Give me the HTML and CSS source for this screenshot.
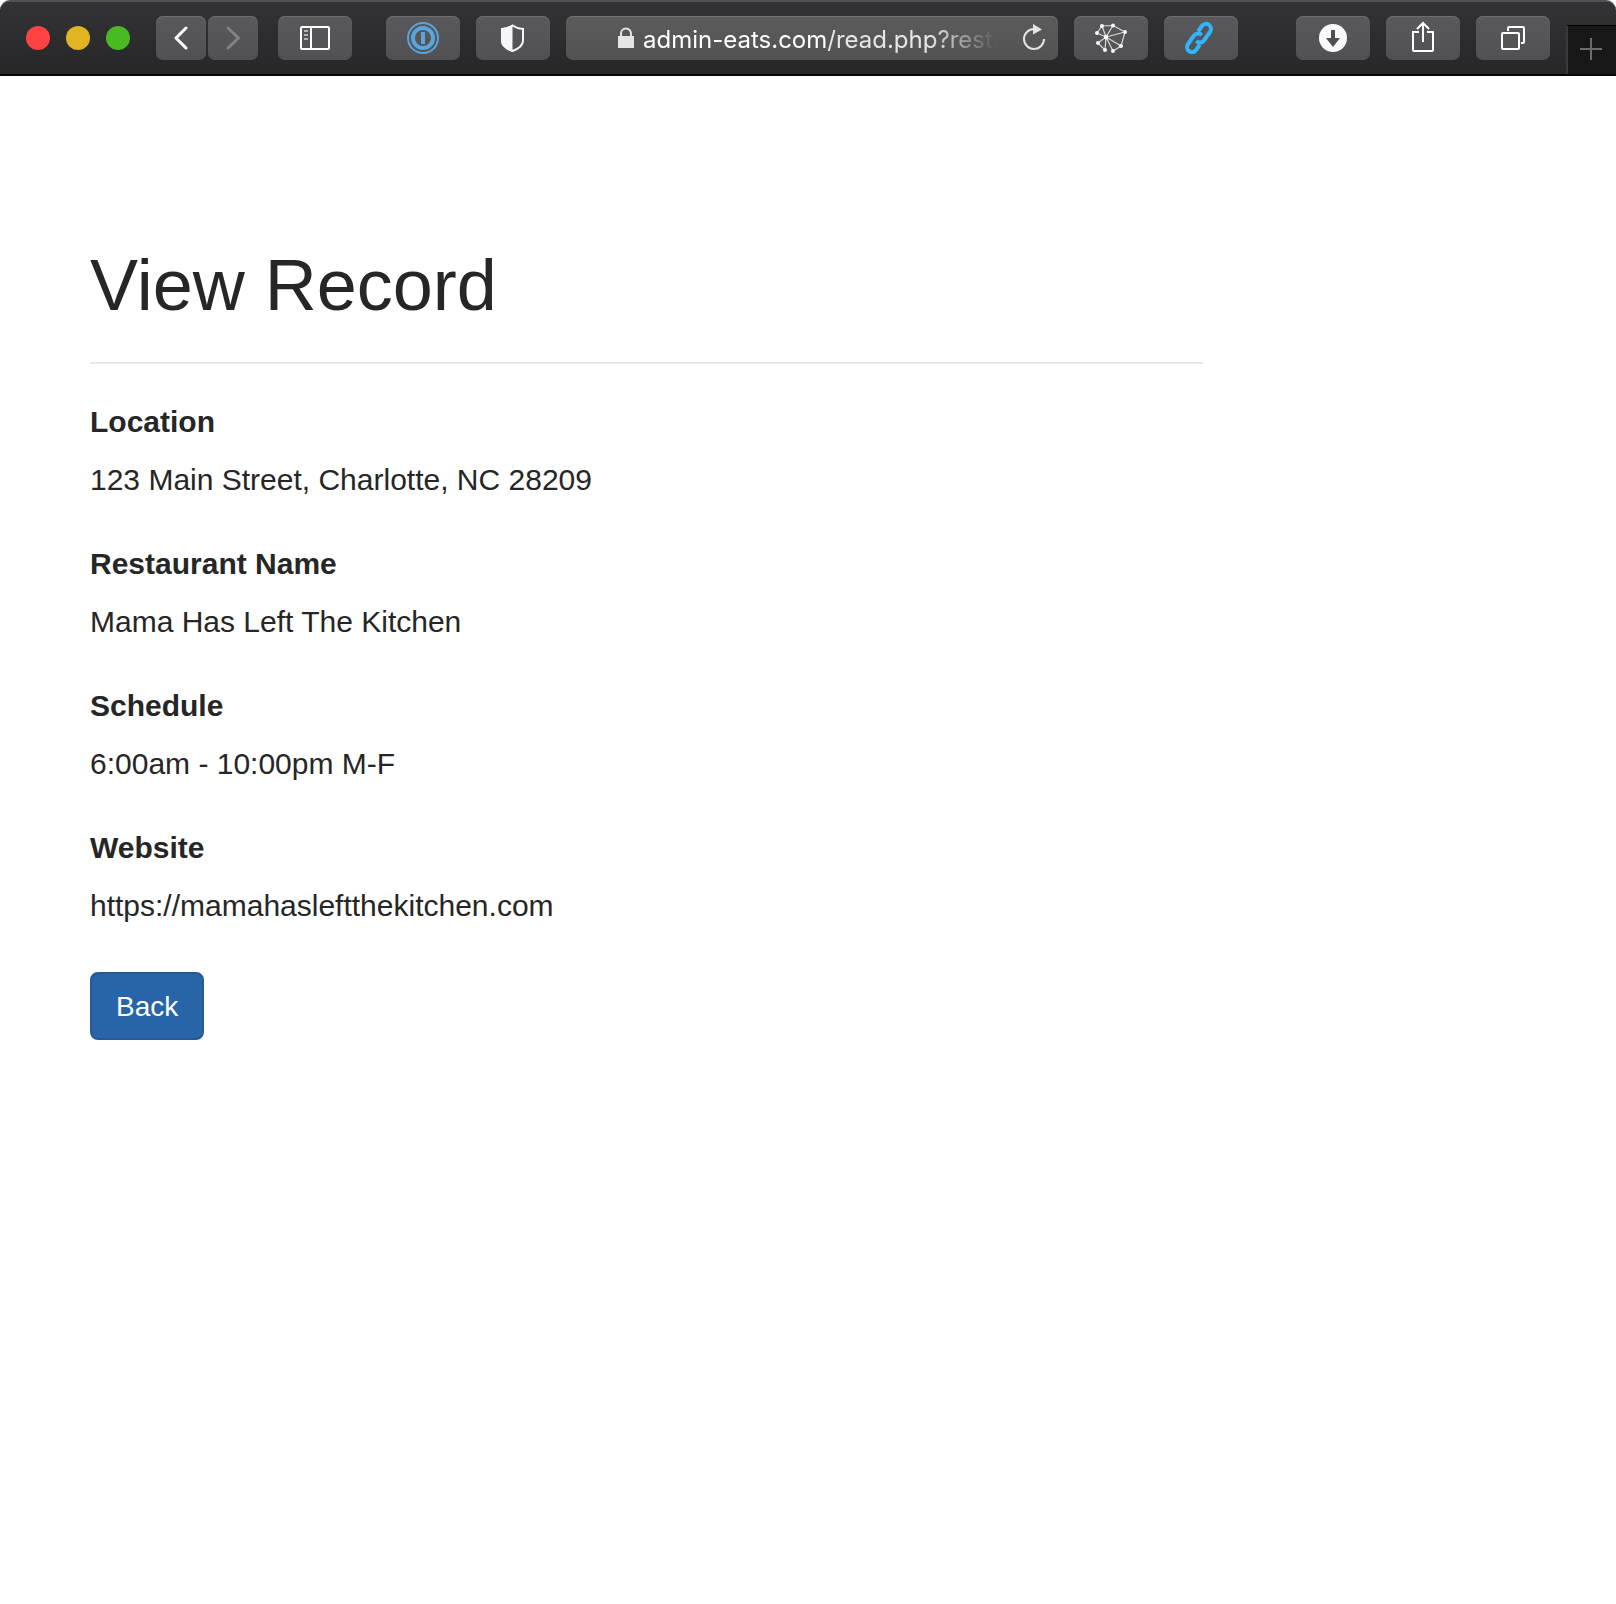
FILE: index.html
```html
<!DOCTYPE html>
<html lang="en">
<head>
<meta charset="utf-8">
<meta name="viewport" content="width=device-width, initial-scale=1">
<title>View Record</title>
<link rel="stylesheet" href="styles.css">
</head>
<body>
<header class="toolbar">
  <div class="lights">
    <button class="light light-close" aria-label="Close"></button>
    <button class="light light-min" aria-label="Minimize"></button>
    <button class="light light-max" aria-label="Zoom"></button>
  </div>
  <nav class="history">
    <button class="tool tool-narrow" aria-label="Back">
      <svg width="50" height="44" viewBox="0 0 50 44" fill="none" stroke="#fff" stroke-width="3" stroke-linecap="round" stroke-linejoin="round"><path d="M30 12 20 22l10 10"/></svg>
    </button>
    <button class="tool tool-narrow" aria-label="Forward" disabled>
      <svg width="50" height="44" viewBox="0 0 50 44" fill="none" stroke="#828284" stroke-width="3" stroke-linecap="round" stroke-linejoin="round"><path d="M20 12l10.500 10L20 32"/></svg>
    </button>
  </nav>
  <button class="tool sidebar" aria-label="Show sidebar">
    <svg width="74" height="44" viewBox="0 0 74 44" fill="none" stroke="#fff" stroke-width="2"><rect x="23" y="11" width="28" height="22" rx="1"/><path d="M33 11v22"/><path d="M26 15h4M26 19h4M26 23h4" stroke="#b4b4b5"/></svg>
  </button>
  <div class="tools tools-left">
    <button class="tool" aria-label="1Password">
      <svg width="74" height="44" viewBox="0 0 74 44" fill="none" stroke="#5aa5dc"><circle cx="37" cy="22" r="15" stroke-width="2"/><circle cx="37" cy="22" r="10" stroke-width="4"/><path d="M37 16v12" stroke-width="4"/></svg>
    </button>
    <button class="tool" aria-label="Privacy report">
      <svg width="74" height="44" viewBox="0 0 74 44"><path d="M36.500 9.500C33 12 29.500 12.700 26 13v11.500c0 5 5 8.500 10.500 10.500C42 33 47 29.500 47 24.500V13c-3.500-.3-7-1-10.500-3.500z" fill="none" stroke="#f7f7f9" stroke-width="2"/><path d="M36.500 8.500C33 11 29 12 25 12v12.500c0 6 6 9.500 11.500 11.500z" fill="#f7f7f9"/></svg>
    </button>
  </div>
  <div class="address">
    <svg width="16" height="22" viewBox="0 0 16 22"><path d="M0 9h16v12H0z" fill="#e4e4e4"/><path d="M3 10V6.500a5 5 0 0 1 10 0V10" fill="none" stroke="#e4e4e4" stroke-width="2"/></svg>
    <input class="url" type="text" aria-label="Address" value="admin-eats.com/read.php?restaurant=1" readonly>
    <button class="reload" aria-label="Reload">
      <svg width="24" height="28" viewBox="0 0 24 28"><path d="M12 6a10 10 0 1 0 10 10" fill="none" stroke="#e4e4e4" stroke-width="2"/><path d="M11 1l9 5.500-9 5z" fill="#e4e4e4"/></svg>
    </button>
  </div>
  <div class="tools">
    <button class="tool" aria-label="Network extension">
      <svg width="74" height="44" viewBox="0 0 74 44" fill="none" stroke="#d8d8d9" stroke-width="1.200"><path d="M23 17l5-7 11-.5L51 16l-4 14-8 5M24 27l7 7M32 21l-9-4M32 21l-4-11M32 21l7-11.500M32 21l19-5M32 21l15 9M32 21l7 14M32 21l-1 13M32 21l-8 6"/><g fill="#fafafa" stroke="none"><circle cx="32" cy="21" r="2.200"/><circle cx="28" cy="10" r="2"/><circle cx="39" cy="9.500" r="2"/><circle cx="51" cy="16" r="2"/><circle cx="47" cy="30" r="2"/><circle cx="39" cy="35" r="2"/><circle cx="31" cy="34" r="2"/><circle cx="24" cy="27" r="2"/><circle cx="23" cy="17" r="2"/></g></svg>
    </button>
    <button class="tool" aria-label="Copy link">
      <svg width="74" height="44" viewBox="0 0 74 44" fill="none" stroke="#33b5fb" stroke-width="4"><g transform="translate(35 22) rotate(35)"><path d="M-4.500-5v-6.500a5 5 0 0 1 10 0V-1a5 5 0 0 1-6 5"/><path d="M4.500 5v6.500a5 5 0 0 1-10 0V1a5 5 0 0 1 6-5"/></g></svg>
    </button>
  </div>
  <div class="tools tools-right">
    <button class="tool" aria-label="Downloads">
      <svg width="74" height="44" viewBox="0 0 74 44"><circle cx="37" cy="22" r="14" fill="#f9f9fb"/><path d="M35 14h4v8h5l-7 9-7-9h5z" fill="#4f4f51"/></svg>
    </button>
    <button class="tool" aria-label="Share">
      <svg width="74" height="44" viewBox="0 0 74 44" fill="none" stroke="#fff" stroke-width="2"><path d="M33 16h-6v18q0 1 1 1h18q1 0 1-1V16h-6M37 26V8M31 13l6-6 6 6"/></svg>
    </button>
    <button class="tool" aria-label="Tab overview">
      <svg width="74" height="44" viewBox="0 0 74 44" fill="none" stroke="#fff" stroke-width="2"><rect x="26" y="17" width="17" height="16" rx="1"/><path d="M32 15v-3q0-1 1-1h14q1 0 1 1v14q0 1-1 1h-2"/></svg>
    </button>
  </div>
  <button class="new-tab" aria-label="New tab">
    <svg width="22" height="22" viewBox="0 0 22 22" stroke="#6c6c6c" stroke-width="2"><path d="M11 0v22M0 11h22"/></svg>
  </button>
</header>
<main class="page">
  <h1>View Record</h1>
  <dl class="record">
    <div><dt>Location</dt><dd>123 Main Street, Charlotte, NC 28209</dd></div>
    <div><dt>Restaurant Name</dt><dd>Mama Has Left The Kitchen</dd></div>
    <div><dt>Schedule</dt><dd>6:00am - 10:00pm M-F</dd></div>
    <div><dt>Website</dt><dd>https://mamahasleftthekitchen.com</dd></div>
  </dl>
  <a class="btn" href="#">Back</a>
</main>
</body>
</html>
```
FILE: styles.css
```css
* { box-sizing: border-box; }

body {
  margin: 0;
  background: #fff;
  color: #262626;
  font: 30px/42px "Liberation Sans", Arial, sans-serif;
}

button {
  margin: 0;
  padding: 0;
  border: 0;
  background: none;
}

svg { display: block; flex: none; }

.toolbar {
  display: flex;
  align-items: center;
  height: 76px;
  padding-left: 26px;
  background: linear-gradient(#333335, #272729);
  border-top: 2px solid #4e5052;
  border-bottom: 2px solid #060606;
  border-radius: 10px 10px 0 0;
}

.lights { display: flex; gap: 16px; margin-right: 26px; }
.light { width: 24px; height: 24px; border-radius: 50%; }
.light-close { background: #ff4243; }
.light-min { background: #e0b422; }
.light-max { background: #48bb22; }

.history { display: flex; gap: 2px; margin-right: 20px; }

.tool {
  width: 74px;
  height: 44px;
  flex: none;
  border-radius: 7px;
  background: linear-gradient(#59595b, #515153);
  box-shadow: inset 0 1px #6d6d6e;
}
.tool-narrow { width: 50px; }
.sidebar { margin-right: 34px; }

.tools { display: flex; gap: 16px; }
.tools-left { margin-right: 16px; }
.tools-right { margin: 0 16px 0 58px; }

.address {
  display: flex;
  flex: 1;
  align-items: center;
  min-width: 0;
  height: 44px;
  margin-right: 16px;
  padding: 0 12px 0 52px;
  border-radius: 7px;
  background: linear-gradient(#5b5b5b, #535353);
  box-shadow: inset 0 1px #737373;
}

.url {
  flex: 1;
  min-width: 0;
  height: 44px;
  margin: 0 24px 0 9px;
  padding: 3px 0 0;
  border: 0;
  outline: 0;
  background: none;
  color: #fff;
  font: 400 24px/40px Inter, sans-serif;
  mask-image: linear-gradient(to right, #000 182px, rgba(0, 0, 0, .85) 184px, rgba(0, 0, 0, .85) 286px, transparent 354px);
}

.reload svg { margin-top: -2px; }

.new-tab {
  display: flex;
  align-items: center;
  justify-content: center;
  align-self: flex-end;
  width: 50px;
  height: 49px;
  padding: 0 2px 2px 0;
  border-top: 1px solid #000;
  border-left: 2px solid #3a3a3a;
  background: #171717;
}

.page {
  width: 100%;
  max-width: 1203px;
  padding: 169px 0 60px 90px;
}

h1 {
  margin: 0 0 37px;
  padding-bottom: 37px;
  border-bottom: 2px solid #e9e9e9;
  font-size: 72px;
  font-weight: 400;
  line-height: 80px;
}

.record {
  display: grid;
  gap: 42px;
  margin: 0 0 45px;
}
dt { margin-bottom: 16px; font-weight: 700; }
dd { margin: 0; }

.btn {
  display: inline-block;
  padding: 12px 24px 10px;
  border: 2px solid #245a94;
  border-radius: 8px;
  background: #2865a8;
  color: #fff;
  font-size: 28px;
  text-decoration: none;
  vertical-align: top;
}
```
